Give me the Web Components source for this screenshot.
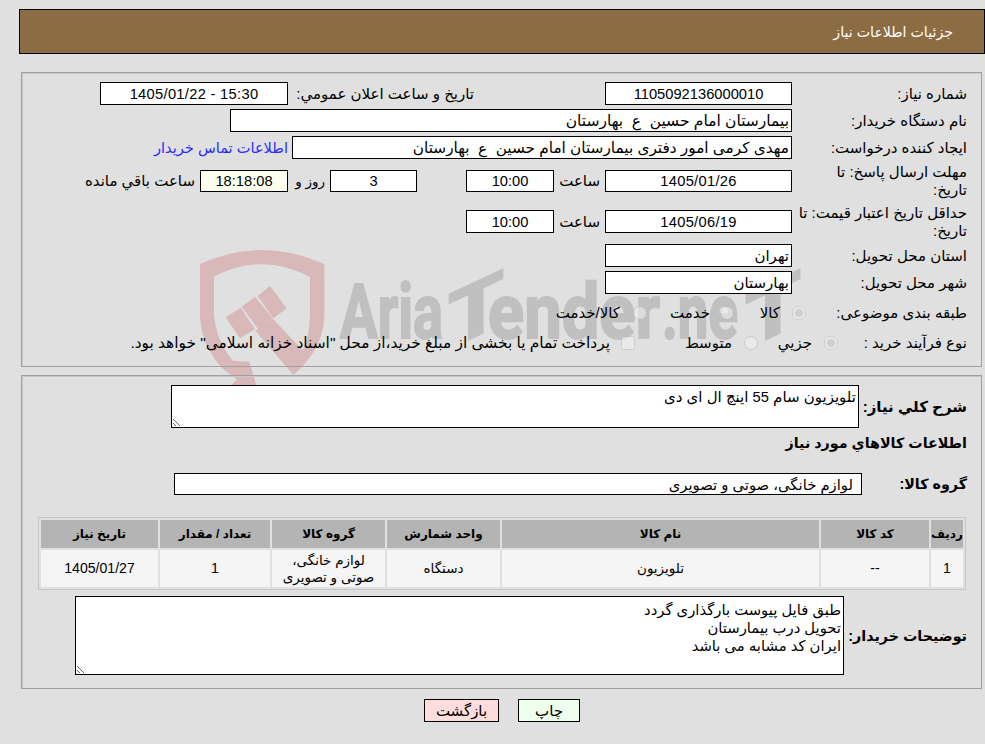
<!DOCTYPE html>
<html lang="fa" dir="rtl">
<head>
<meta charset="utf-8">
<title>جزئیات اطلاعات نیاز</title>
<style>
html, body { margin: 0; padding: 0; background: #e0e0e0; }
body {
    position: relative;
    width: 985px;
    height: 744px;
    overflow: hidden;
    font-family: "Liberation Sans", "DejaVu Sans", sans-serif;
    font-size: 15px;
    color: #000;
}
.num { font-size: 14.7px; }
</style>
</head>
<body>
<aria-watermark></aria-watermark>
<need-page>
    <need-header>جزئیات اطلاعات نیاز</need-header>

    <need-panel>
        <need-row label="شماره نیاز:">
            <need-box w="187" center num>1105092136000010</need-box>
            <need-text w="181" gap="131">تاریخ و ساعت اعلان عمومي:</need-text>
            <need-box w="188" gap="5" center num date>15:30 - 1405/01/22</need-box>
        </need-row>
        <need-row label="نام دستگاه خریدار:" top="4">
            <need-box w="562" size="15.5">بیمارستان امام حسین  ع  بهارستان</need-box>
        </need-row>
        <need-row label="ایجاد کننده درخواست:" top="4">
            <need-box w="500" size="15.3">مهدی کرمی امور دفتری بیمارستان امام حسین  ع  بهارستان</need-box>
            <need-text w="140" gap="4" link size="14.6">اطلاعات تماس خریدار</need-text>
        </need-row>
        <need-row label="مهلت ارسال پاسخ: تا&lt;br&gt;تاریخ:" top="11" h="22">
            <need-box w="187" h="22" center num date>1405/01/26</need-box>
            <need-text w="46" gap="5">ساعت</need-text>
            <need-box w="88" h="22" center num>10:00</need-box>
            <need-box w="87" h="22" center num gap="49">3</need-box>
            <need-text w="34" gap="5" size="13.5">روز و</need-text>
            <need-box w="88" h="22" center num gap="3" tone="#fffff0">18:18:08</need-box>
            <need-text w="120" gap="5">ساعت باقي مانده</need-text>
        </need-row>
        <need-row label="حداقل تاریخ اعتبار قیمت: تا&lt;br&gt;تاریخ:" top="18">
            <need-box w="187" center num date>1405/06/19</need-box>
            <need-text w="46" gap="5">ساعت</need-text>
            <need-box w="88" center num>10:00</need-box>
        </need-row>
        <need-row label="استان محل تحویل:" top="11">
            <need-box w="187">تهران</need-box>
        </need-row>
        <need-row label="شهر محل تحویل:" top="4">
            <need-box w="187">بهارستان</need-box>
        </need-row>
        <need-row label="طبقه بندی موضوعی:" col="161" top="7">
            <need-choice w="72" space="12" checked>کالا</need-choice>
            <need-choice w="87" space="10">خدمت</need-choice>
            <need-choice w="100" space="13">کالا/خدمت</need-choice>
        </need-row>
        <need-row label="نوع فرآیند خرید :" col="129" top="7">
            <need-choice w="80" space="12" checked>جزيي</need-choice>
            <need-choice w="123" space="12">متوسط</need-choice>
            <need-choice w="500" space="11" box size="15.4">پرداخت تمام یا بخشی از مبلغ خرید،از محل "اسناد خزانه اسلامی" خواهد بود.</need-choice>
        </need-row>
    </need-panel>

    <need-panel second>
        <need-row label="شرح كلي نیاز:" bold col="108" h="43" size="15">
            <need-note w="688" h="43" pad="2">تلویزیون سام <span class="num">55</span> اینچ ال ای دی</need-note>
        </need-row>
        <need-row label="اطلاعات کالاهاي مورد نیاز" bold col="400" h="20" top="5"></need-row>
        <need-row label="گروه کالا:" bold col="105" h="22" top="20">
            <need-box w="688" h="22" pad="8" size="14.8">لوازم خانگی، صوتی و تصویری</need-box>
        </need-row>
        <need-items></need-items>
        <need-row label="توضیحات خریدار:" bold col="123" h="79" top="6">
            <need-note w="769" h="79" pad="4" size="14.8">طبق فایل پیوست بارگذاری گردد<br>تحویل درب بیمارستان<br>ایران کد مشابه می باشد</need-note>
        </need-row>
    </need-panel>

    <need-actions>
        <need-button w="62" tone="#eeffee">چاپ</need-button>
        <need-button w="75" tone="#ffdddd">بازگشت</need-button>
    </need-actions>
</need-page>

<script>
class NeedPage extends HTMLElement {
    constructor() {
        super()
        this.shadow = this.attachShadow({ mode: 'open' })
    }
    connectedCallback() {
        this.shadow.innerHTML = /*html*/ `
            <style>
:host {
    display: block;
    position: relative;
    padding: 9px 0 0 19px;
}
            </style>
            <slot></slot>
        `
    }
}

class NeedHeader extends HTMLElement {
    constructor() {
        super()
        this.shadow = this.attachShadow({ mode: 'open' })
    }
    connectedCallback() {
        this.shadow.innerHTML = /*html*/ `
            <style>
:host {
    display: flex;
    align-items: center;
    box-sizing: border-box;
    height: 45px;
    padding: 0 31px 0 0;
    margin-bottom: 18px;
    background: #8c6c42;
    border: 1px solid #000;
    color: #fff;
    font-size: 14.2px;
}
            </style>
            <slot></slot>
        `
    }
}

class NeedPanel extends HTMLElement {
    constructor() {
        super()
        this.shadow = this.attachShadow({ mode: 'open' })
    }
    connectedCallback() {
        const second = this.hasAttribute('second')
        this.shadow.innerHTML = /*html*/ `
            <style>
:host {
    display: block;
    box-sizing: border-box;
    height: ${second ? 314 : 295}px;
    margin: ${second ? 8 : 0}px 3px 0 2px;
    padding: 9px 14px 0 16px;
    border: 1px solid #a0a0a0;
    box-shadow: inset 1px 1px 0 #c8c8c8;
}
            </style>
            <slot></slot>
        `
    }
}

class NeedRow extends HTMLElement {
    constructor() {
        super()
        this.shadow = this.attachShadow({ mode: 'open' })
    }
    connectedCallback() {
        const col = this.getAttribute('col') || 175
        const h = this.getAttribute('h') || 23
        const top = this.getAttribute('top') || 0
        const bold = this.hasAttribute('bold')
        const size = this.getAttribute('size') || (bold ? 14.3 : 15)
        this.shadow.innerHTML = /*html*/ `
            <style>
:host {
    display: flex;
    align-items: center;
    height: ${h}px;
    margin-top: ${top}px;
}
.label {
    flex: none;
    box-sizing: border-box;
    width: ${col}px;
    padding-left: 2px;
    line-height: 18px;
    font-weight: ${bold ? 700 : 400};
    font-size: ${size}px;
}
.content {
    display: flex;
    align-items: center;
    flex: 1;
    min-width: 0;
}
            </style>
            <div class="label">${this.getAttribute('label')}</div>
            <div class="content"><slot></slot></div>
        `
    }
}

class NeedBox extends HTMLElement {
    constructor() {
        super()
        this.shadow = this.attachShadow({ mode: 'open' })
    }
    connectedCallback() {
        const center = this.hasAttribute('center')
        const size = this.getAttribute('size') || (this.hasAttribute('num') ? 14.7 : 15)
        this.shadow.innerHTML = /*html*/ `
            <style>
:host {
    display: flex;
    align-items: center;
    justify-content: ${center ? 'center' : 'flex-start'};
    flex: none;
    box-sizing: border-box;
    width: ${this.getAttribute('w')}px;
    height: ${this.getAttribute('h') || 23}px;
    margin-inline-start: ${this.getAttribute('gap') || 0}px;
    padding: 0 ${this.getAttribute('pad') || 2}px;
    background: ${this.getAttribute('tone') || '#fff'};
    border: 1px solid #000;
    font-size: ${size}px;
    letter-spacing: ${this.hasAttribute('date') ? .3 : 0}px;
}
span { white-space: pre; }
            </style>
            <span><slot></slot></span>
        `
    }
}

class NeedText extends HTMLElement {
    constructor() {
        super()
        this.shadow = this.attachShadow({ mode: 'open' })
    }
    connectedCallback() {
        this.shadow.innerHTML = /*html*/ `
            <style>
:host {
    display: block;
    flex: none;
    width: ${this.getAttribute('w')}px;
    margin-inline-start: ${this.getAttribute('gap') || 0}px;
    white-space: nowrap;
    font-size: ${this.getAttribute('size') || 15}px;
    color: ${this.hasAttribute('link') ? '#2a2aff' : 'inherit'};
}
            </style>
            <slot></slot>
        `
    }
}

class NeedChoice extends HTMLElement {
    constructor() {
        super()
        this.shadow = this.attachShadow({ mode: 'open' })
    }
    connectedCallback() {
        const type = this.hasAttribute('box') ? 'checkbox' : 'radio'
        const checked = this.hasAttribute('checked') ? 'checked' : ''
        this.shadow.innerHTML = /*html*/ `
            <style>
:host {
    display: flex;
    align-items: center;
    flex: none;
    width: ${this.getAttribute('w')}px;
    white-space: nowrap;
    font-size: ${this.getAttribute('size') || 15}px;
}
input {
    flex: none;
    width: 14px;
    height: 14px;
    margin: 0 0 0 ${this.getAttribute('space')}px;
    opacity: .75;
}
            </style>
            <input type="${type}" disabled ${checked}>
            <span><slot></slot></span>
        `
    }
}

class NeedNote extends HTMLElement {
    constructor() {
        super()
        this.shadow = this.attachShadow({ mode: 'open' })
    }
    connectedCallback() {
        this.shadow.innerHTML = /*html*/ `
            <style>
:host {
    display: block;
    flex: none;
    box-sizing: border-box;
    width: ${this.getAttribute('w')}px;
    height: ${this.getAttribute('h')}px;
    padding: ${this.getAttribute('pad') || 3}px 2px;
    background: #fff;
    border: 1px solid #000;
    line-height: 18px;
    font-size: ${this.getAttribute('size') || 15}px;
    overflow: auto;
    resize: both;
}
            </style>
            <slot></slot>
        `
    }
}

class NeedItems extends HTMLElement {
    constructor() {
        super()
        this.shadow = this.attachShadow({ mode: 'open' })
    }
    connectedCallback() {
        const widths = [32, 108, 317, 113, 113, 110, 117]
        const heads = ['رديف', 'کد کالا', 'نام کالا', 'واحد شمارش', 'گروه کالا', 'تعداد / مقدار', 'تاریخ نیاز']
        const cells = [
            ['1', true],
            ['--', true],
            ['تلویزیون', false],
            ['دستگاه', false],
            ['لوازم خانگی،<br>صوتی و تصویری', false],
            ['1', true],
            ['1405/01/27', true]
        ]
        this.shadow.innerHTML = /*html*/ `
            <style>
:host {
    display: block;
    width: 928px;
    margin: 22px 1px 0 0;
}
table {
    width: 928px;
    table-layout: fixed;
    border-collapse: separate;
    border-spacing: 2px;
    border: 1px solid #c6c6c6;
}
th, td {
    padding: 0;
    text-align: center;
}
th {
    height: 28px;
    background: #b4b4b4;
    font-size: 12px;
}
td {
    height: 37px;
    background: #f5f5f5;
    line-height: 17px;
    font-size: 13.5px;
}
td.num { font-size: 14.1px; }
            </style>
            <table>
                <colgroup>${widths.map(w => `<col style="width:${w}px">`).join('')}</colgroup>
                <tr>${heads.map(h => `<th>${h}</th>`).join('')}</tr>
                <tr>${cells.map(c => `<td class="${c[1] ? 'num' : ''}">${c[0]}</td>`).join('')}</tr>
            </table>
        `
    }
}

class NeedActions extends HTMLElement {
    constructor() {
        super()
        this.shadow = this.attachShadow({ mode: 'open' })
    }
    connectedCallback() {
        this.shadow.innerHTML = /*html*/ `
            <style>
:host {
    display: flex;
    justify-content: center;
    gap: 19px;
    margin-top: 10px;
}
            </style>
            <slot></slot>
        `
    }
}

class NeedButton extends HTMLElement {
    constructor() {
        super()
        this.shadow = this.attachShadow({ mode: 'open' })
    }
    connectedCallback() {
        this.shadow.innerHTML = /*html*/ `
            <style>
:host {
    display: flex;
    align-items: center;
    justify-content: center;
    box-sizing: border-box;
    width: ${this.getAttribute('w')}px;
    height: 23px;
    background: ${this.getAttribute('tone')};
    border: 1px solid #000;
    font-size: 15px;
    cursor: pointer;
}
            </style>
            <slot></slot>
        `
    }
}

class AriaWatermark extends HTMLElement {
    constructor() {
        super()
        this.shadow = this.attachShadow({ mode: 'open' })
    }
    connectedCallback() {
        this.shadow.innerHTML = /*html*/ `
            <style>
:host {
    position: absolute;
    left: 0;
    top: 0;
    width: 985px;
    height: 744px;
}
svg { display: block; }
text {
    font-family: Roboto, "Liberation Sans", sans-serif;
    font-weight: 700;
    font-size: 76px;
    fill: #c0c0c0;
    stroke: #c0c0c0;
    stroke-width: 2px;
}
            </style>
            <svg width="985" height="744" viewBox="0 0 985 744" direction="ltr">
                <g transform="translate(190 240) scale(.3333)" fill="#d9b8ba">
                    <path d="M30 72Q215 -12 403 72L403 230Q398 330 310 405L196 272L248 236L338 330Q360 285 360 225L360 110Q215 35 72 110L72 225Q78 300 128 362L178 365L200 438L122 438L140 418L100 388Q35 320 30 230Z"/>
                    <path d="M107 232L152 203L195 268L150 295Z"/>
                    <path d="M155 200L195 170L248 235L205 268Z"/>
                    <path d="M203 168L240 138L290 205L250 235Z"/>
                </g>
                <text x="340" y="338" textLength="103" lengthAdjust="spacingAndGlyphs">Aria</text>
                <text transform="translate(448 338) skewY(-25)" x="0" y="11" textLength="56" lengthAdjust="spacingAndGlyphs">T</text>
                <text x="488" y="338" textLength="172" lengthAdjust="spacingAndGlyphs">ender</text>
                <text x="662" y="338" textLength="76" lengthAdjust="spacingAndGlyphs">.ne</text>
                <text transform="translate(745 338) skewY(-25)" x="0" y="11" textLength="56" lengthAdjust="spacingAndGlyphs">T</text>
            </svg>
        `
    }
}

customElements.define('need-page', NeedPage)
customElements.define('need-header', NeedHeader)
customElements.define('need-panel', NeedPanel)
customElements.define('need-row', NeedRow)
customElements.define('need-box', NeedBox)
customElements.define('need-text', NeedText)
customElements.define('need-choice', NeedChoice)
customElements.define('need-note', NeedNote)
customElements.define('need-items', NeedItems)
customElements.define('need-actions', NeedActions)
customElements.define('need-button', NeedButton)
customElements.define('aria-watermark', AriaWatermark)
</script>
</body>
</html>
